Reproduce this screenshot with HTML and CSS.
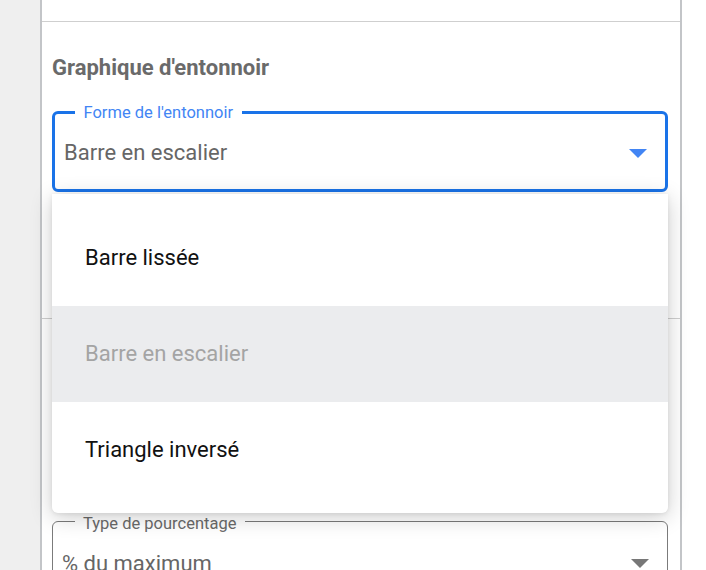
FILE: index.html
```html
<!DOCTYPE html>
<html lang="fr">
<head>
<meta charset="utf-8">
<title>Graphique d'entonnoir</title>
<link rel="stylesheet" href="styles.css">
</head>
<body>
<div class="page">
  <div class="gutter"></div>
  <div class="panel">
    <div class="section section-top"></div>
    <div class="section section-funnel">
      <h2 class="heading">Graphique d'entonnoir</h2>
      <div class="field field-active">
        <span class="field-label">Forme de l'entonnoir</span>
        <span class="field-value">Barre en escalier</span>
        <svg class="arrow" width="18" height="9" viewBox="0 0 18 9"><path d="M0 0H18L9 9Z"/></svg>
        <ul class="menu">
          <li class="menu-item">Barre lissée</li>
          <li class="menu-item menu-item-selected">Barre en escalier</li>
          <li class="menu-item">Triangle inversé</li>
        </ul>
      </div>
    </div>
    <div class="section section-percent">
      <div class="field field-idle">
        <span class="field-label">Type de pourcentage</span>
        <span class="field-value">% du maximum</span>
        <svg class="arrow" width="18" height="9" viewBox="0 0 18 9"><path d="M0 0H18L9 9Z"/></svg>
      </div>
    </div>
  </div>
  <div class="outside"></div>
</div>
</body>
</html>
```
FILE: styles.css
```css
html, body {
  margin: 0;
  padding: 0;
  background: #ffffff;
  font-family: Roboto, "Liberation Sans", Arial, sans-serif;
}

.page {
  display: flex;
  width: 706px;
  height: 570px;
  overflow: hidden;
}

.gutter {
  width: 40px;
  flex: none;
  background: #efefef;
}

.panel {
  width: 638px;
  flex: none;
  border-left: 2px solid #c3c5c8;
  border-right: 2px solid #c3c5c8;
  background: #ffffff;
  display: flex;
  flex-direction: column;
}

.outside {
  flex: 1;
  background: #ffffff;
}

.section {
  flex: none;
  padding: 0 12px 0 10px;
  border-bottom: 1.5px solid #cfcfcf;
}

.section-top {
  height: 21px;
}

.section-funnel {
  padding-top: 32.5px;
  padding-bottom: 126px;
}

.section-percent {
  border-bottom: none;
  padding-top: 202.5px;
}

.heading {
  margin: 0 0 30px 0;
  font-size: 22px;
  line-height: 26px;
  font-weight: 700;
  color: #6a6a6a;
}

.field {
  position: relative;
  display: flex;
  align-items: center;
  justify-content: space-between;
  box-sizing: content-box;
  padding: 4px 18px 0 9px;
  border-radius: 6px;
  background: #ffffff;
}

.field-active {
  border: 3px solid #1a73e8;
  height: 71px;
}

.field-idle {
  border: 1.5px solid #7b7b7b;
  padding-top: 6px;
  height: 71px;
}

.field-label {
  position: absolute;
  left: 20px;
  padding: 0 8.5px;
  background: #ffffff;
  font-size: 16.5px;
  line-height: 19px;
}

.field-active .field-label {
  color: #4285f4;
  top: -10.5px;
}

.field-idle .field-label {
  color: #6a6a6a;
  top: -8px;
  left: 21.5px;
}

.field-value {
  font-size: 22px;
  line-height: 26px;
  color: #666666;
}

.arrow {
  flex: none;
  display: block;
}

.field-active .arrow {
  fill: #4285f4;
}

.field-idle .arrow {
  fill: #777777;
}

.menu {
  position: absolute;
  z-index: 10;
  top: calc(100% + 5px);
  left: -3px;
  right: -3px;
  margin: 0;
  padding: 16px 0 15px 0;
  list-style: none;
  background: #ffffff;
  border-radius: 0 0 6px 6px;
  box-shadow: 0 4px 22px rgba(0, 0, 0, 0.2), 0 1px 4px rgba(0, 0, 0, 0.08);
}

.menu-item {
  height: 96px;
  display: flex;
  align-items: center;
  padding-left: 33px;
  font-size: 22px;
  line-height: 26px;
  color: #111111;
}

.menu-item-selected {
  background: #ebecee;
  color: #a4a4a4;
}
```
